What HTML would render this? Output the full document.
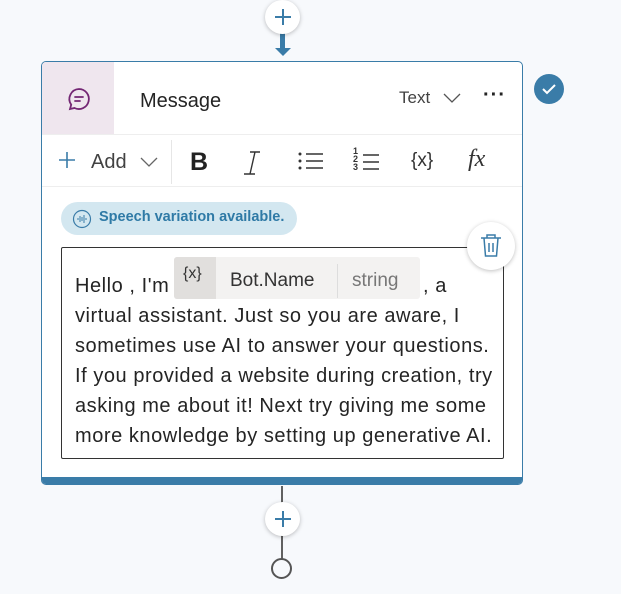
<html><head><style>
body{margin:0;width:621px;height:594px;background:#f7f9fc;font-family:"Liberation Sans",sans-serif;position:relative;overflow:hidden}
.abs{position:absolute}
.circ{border-radius:50%;background:#fff;box-shadow:0 1px 4px rgba(0,0,0,.25)}
.line{background:#616161;width:2px}
.card{left:41px;top:61px;width:482px;height:424px;background:#fff;border:1px solid #3a7ca8;border-radius:5px;box-sizing:border-box;overflow:hidden}
.tl{left:33px;white-space:nowrap;font-size:20px;color:#242424;letter-spacing:.55px}
</style></head><body>
<div class="abs line" style="top:30px;height:20px;background:#3a7ca8;width:5px;left:280px"></div>
<svg class="abs" style="left:273px;top:44px" width="20" height="16"><path d="M2 4 L10 12 L18 4 Z" fill="#3a7ca8"/></svg>
<div class="abs circ" style="left:265px;top:0px;width:35px;height:34px"></div>
<svg class="abs" style="left:273px;top:7px" width="20" height="20"><path d="M10 2V18M2 10H18" stroke="#3a7ca8" stroke-width="2"/></svg>

<div class="abs card">
 <div class="abs" style="left:0;top:0;width:72px;height:72px;background:#efe6ee"></div>
 <svg class="abs" style="left:24px;top:24px" width="26" height="26" viewBox="0 0 26 26"><path d="M13 3a10 10 0 1 1-4.5 19L4 23l1.2-4.3A10 10 0 0 1 13 3z" fill="none" stroke="#742774" stroke-width="1.8"/><path d="M9 11h8M9 15h5" stroke="#742774" stroke-width="1.8" stroke-linecap="round"/></svg>
 <div class="abs" style="left:98px;top:28px;font-size:20px;color:#242424">Message</div>
 <div class="abs" style="left:357px;top:26px;font-size:17px;color:#424242">Text</div>
 <svg class="abs" style="left:400px;top:29px" width="20" height="14"><path d="M2 3l8 8 8-8" fill="none" stroke="#555" stroke-width="1.3"/></svg>
 <div class="abs" style="left:441px;top:22px;font-size:20px;font-weight:bold;letter-spacing:1px;color:#242424">···</div>
 <div class="abs" style="left:0;top:72px;width:482px;height:1px;background:#eee"></div>
 <div class="abs" style="left:0;top:124px;width:482px;height:1px;background:#eee"></div>
 <div class="abs" style="left:129px;top:78px;width:1px;height:44px;background:#e6e6e6"></div>
 <svg class="abs" style="left:16px;top:89px" width="18" height="18"><path d="M9 1V17M1 9H17" stroke="#3a7ca8" stroke-width="1.6"/></svg>
 <div class="abs" style="left:49px;top:89px;font-size:20px;color:#424242">Add</div>
 <svg class="abs" style="left:96px;top:93px" width="22" height="14"><path d="M3 3l8 8 8-8" fill="none" stroke="#666" stroke-width="1.3"/></svg>
 <div class="abs" style="left:148px;top:86px;font-size:25px;font-weight:bold;color:#222">B</div>
 <svg class="abs" style="left:199px;top:88px" width="30" height="28"><path d="M9 2h10M14 2L9 24M3 24h11" stroke="#333" stroke-width="1.4" fill="none"/></svg>
 <svg class="abs" style="left:255px;top:89px" width="30" height="22"><circle cx="3" cy="3" r="1.5" fill="#333"/><circle cx="3" cy="10" r="1.5" fill="#333"/><circle cx="3" cy="17" r="1.5" fill="#333"/><path d="M9 3h17M9 10h17M9 17h17" stroke="#333" stroke-width="1.4"/></svg>
 <div class="abs" style="left:311px;top:85px;font-size:9px;line-height:8px;color:#333;font-weight:bold">1<br>2<br>3</div>
 <svg class="abs" style="left:320px;top:89px" width="20" height="22"><path d="M1 4h16M1 11h16M1 18h16" stroke="#333" stroke-width="1.4"/></svg>
 <div class="abs" style="left:369px;top:88px;font-size:19px;color:#333">{x}</div>
 <div class="abs" style="left:426px;top:84px;font-size:24px;font-style:italic;color:#333;font-family:'Liberation Serif',serif">fx</div>
 <div class="abs" style="left:19px;top:140px;width:236px;height:33px;border-radius:17px;background:#d3e7f0"></div>
 <svg class="abs" style="left:30px;top:147px" width="20" height="20"><circle cx="10" cy="10" r="8.5" fill="none" stroke="#3a7ca8" stroke-width="1.2"/><path d="M6 9v2M8 7v6M10 8v4M12 6v8M14 9v2" stroke="#3a7ca8" stroke-width="1"/></svg>
 <div class="abs" style="left:57px;top:147px;font-size:14.5px;font-weight:bold;color:#2f7aa6">Speech variation available.</div>
 <div class="abs" style="left:19px;top:185px;width:443px;height:212px;border:1px solid #333;border-radius:2px;box-sizing:border-box"></div>
 <div class="abs" style="left:132px;top:195px;width:246px;height:42px;background:#f3f2f1;border-radius:3px"></div>
 <div class="abs" style="left:132px;top:195px;width:42px;height:42px;background:#e1dfdd;border-radius:3px 0 0 3px"></div>
 <div class="abs" style="left:141px;top:203px;font-size:16px;color:#333">{x}</div>
 <div class="abs" style="left:188px;top:208px;font-size:19px;color:#333">Bot.Name</div>
 <div class="abs" style="left:295px;top:202px;width:1px;height:34px;background:#ddd"></div>
 <div class="abs" style="left:310px;top:208px;font-size:19px;color:#777">string</div>
 <div class="abs tl" style="top:213px">Hello , I'm</div>
 <div class="abs tl" style="left:381px;top:213px">, a</div>
 <div class="abs tl" style="top:243px">virtual assistant. Just so you are aware, I</div>
 <div class="abs tl" style="top:273px">sometimes use AI to answer your questions.</div>
 <div class="abs tl" style="top:303px">If you provided a website during creation, try</div>
 <div class="abs tl" style="top:333px">asking me about it! Next try giving me some</div>
 <div class="abs tl" style="top:363px">more knowledge by setting up generative AI.</div>
 <div class="abs" style="left:0;top:415px;width:482px;height:9px;background:#3a7ca8"></div>
</div>
<div class="abs circ" style="left:467px;top:222px;width:48px;height:48px"></div>
<svg class="abs" style="left:479px;top:233px" width="24" height="26"><path d="M2 5h20M8 5V2h8v3M5 5l1.5 18h11L19 5M10 10v9M14 10v9" fill="none" stroke="#3a7ca8" stroke-width="1.5"/></svg>
<svg class="abs" style="left:533px;top:73px" width="32" height="32"><circle cx="16" cy="16" r="15" fill="#3a7ca8"/><path d="M10 16l4 4 8-8" fill="none" stroke="#fff" stroke-width="2"/></svg>

<div class="abs line" style="left:281px;top:486px;height:75px"></div>
<div class="abs circ" style="left:265px;top:502px;width:35px;height:34px"></div>
<svg class="abs" style="left:273px;top:509px" width="20" height="20"><path d="M10 2V18M2 10H18" stroke="#3a7ca8" stroke-width="2"/></svg>
<div class="abs" style="left:271px;top:558px;width:17px;height:17px;border:2.5px solid #555;border-radius:50%;background:#f7f9fc"></div>
</body></html>
